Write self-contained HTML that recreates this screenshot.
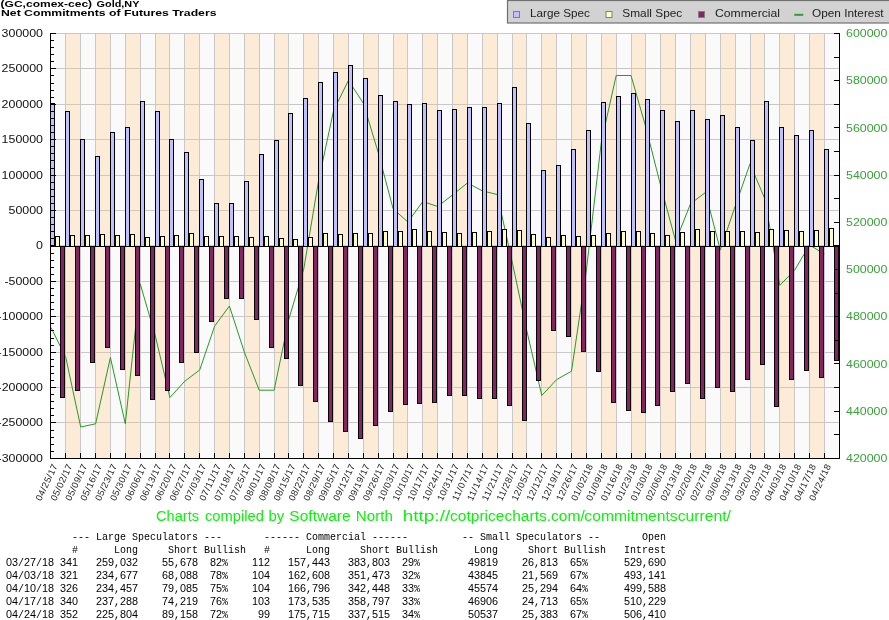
<!DOCTYPE html><html><head><meta charset="utf-8"><title>COT</title>
<style>html,body{margin:0;padding:0;background:#fff}svg{display:block;will-change:transform}text{font-family:"Liberation Sans",sans-serif}.d{font-size:10.8px;fill:#000}.m{font-family:"Liberation Mono",monospace;font-size:11.6px;fill:#000}</style></head><body>
<svg width="889" height="620" viewBox="0 0 889 620">
<rect width="889" height="620" fill="#fff"/>
<g shape-rendering="crispEdges">
<rect x="51" y="33" width="788" height="426" fill="#fafafa"/>
<rect x="51" y="33" width="788" height="1" fill="#c8c8c8"/>
<rect x="51" y="68" width="788" height="1" fill="#c8c8c8"/>
<rect x="51" y="104" width="788" height="1" fill="#c8c8c8"/>
<rect x="51" y="139" width="788" height="1" fill="#c8c8c8"/>
<rect x="51" y="175" width="788" height="1" fill="#c8c8c8"/>
<rect x="51" y="210" width="788" height="1" fill="#c8c8c8"/>
<rect x="51" y="245" width="788" height="1" fill="#c8c8c8"/>
<rect x="51" y="281" width="788" height="1" fill="#c8c8c8"/>
<rect x="51" y="316" width="788" height="1" fill="#c8c8c8"/>
<rect x="51" y="352" width="788" height="1" fill="#c8c8c8"/>
<rect x="51" y="387" width="788" height="1" fill="#c8c8c8"/>
<rect x="51" y="422" width="788" height="1" fill="#c8c8c8"/>
<rect x="51" y="458" width="788" height="1" fill="#c8c8c8"/>
<rect x="66" y="33" width="14" height="426" fill="#ffbe6e" fill-opacity="0.25"/>
<rect x="96" y="33" width="14" height="426" fill="#ffbe6e" fill-opacity="0.25"/>
<rect x="126" y="33" width="14" height="426" fill="#ffbe6e" fill-opacity="0.25"/>
<rect x="156" y="33" width="13" height="426" fill="#ffbe6e" fill-opacity="0.25"/>
<rect x="185" y="33" width="14" height="426" fill="#ffbe6e" fill-opacity="0.25"/>
<rect x="215" y="33" width="14" height="426" fill="#ffbe6e" fill-opacity="0.25"/>
<rect x="245" y="33" width="14" height="426" fill="#ffbe6e" fill-opacity="0.25"/>
<rect x="275" y="33" width="13" height="426" fill="#ffbe6e" fill-opacity="0.25"/>
<rect x="304" y="33" width="14" height="426" fill="#ffbe6e" fill-opacity="0.25"/>
<rect x="334" y="33" width="14" height="426" fill="#ffbe6e" fill-opacity="0.25"/>
<rect x="364" y="33" width="14" height="426" fill="#ffbe6e" fill-opacity="0.25"/>
<rect x="394" y="33" width="13" height="426" fill="#ffbe6e" fill-opacity="0.25"/>
<rect x="423" y="33" width="14" height="426" fill="#ffbe6e" fill-opacity="0.25"/>
<rect x="453" y="33" width="14" height="426" fill="#ffbe6e" fill-opacity="0.25"/>
<rect x="483" y="33" width="14" height="426" fill="#ffbe6e" fill-opacity="0.25"/>
<rect x="513" y="33" width="13" height="426" fill="#ffbe6e" fill-opacity="0.25"/>
<rect x="542" y="33" width="14" height="426" fill="#ffbe6e" fill-opacity="0.25"/>
<rect x="572" y="33" width="14" height="426" fill="#ffbe6e" fill-opacity="0.25"/>
<rect x="602" y="33" width="14" height="426" fill="#ffbe6e" fill-opacity="0.25"/>
<rect x="632" y="33" width="13" height="426" fill="#ffbe6e" fill-opacity="0.25"/>
<rect x="661" y="33" width="14" height="426" fill="#ffbe6e" fill-opacity="0.25"/>
<rect x="691" y="33" width="14" height="426" fill="#ffbe6e" fill-opacity="0.25"/>
<rect x="721" y="33" width="14" height="426" fill="#ffbe6e" fill-opacity="0.25"/>
<rect x="751" y="33" width="13" height="426" fill="#ffbe6e" fill-opacity="0.25"/>
<rect x="780" y="33" width="14" height="426" fill="#ffbe6e" fill-opacity="0.25"/>
<rect x="810" y="33" width="14" height="426" fill="#ffbe6e" fill-opacity="0.25"/>
<rect x="65" y="33" width="1" height="425" fill="#c8c8c8"/>
<rect x="80" y="33" width="1" height="425" fill="#c8c8c8"/>
<rect x="95" y="33" width="1" height="425" fill="#c8c8c8"/>
<rect x="110" y="33" width="1" height="425" fill="#c8c8c8"/>
<rect x="125" y="33" width="1" height="425" fill="#c8c8c8"/>
<rect x="140" y="33" width="1" height="425" fill="#c8c8c8"/>
<rect x="155" y="33" width="1" height="425" fill="#c8c8c8"/>
<rect x="169" y="33" width="1" height="425" fill="#c8c8c8"/>
<rect x="184" y="33" width="1" height="425" fill="#c8c8c8"/>
<rect x="199" y="33" width="1" height="425" fill="#c8c8c8"/>
<rect x="214" y="33" width="1" height="425" fill="#c8c8c8"/>
<rect x="229" y="33" width="1" height="425" fill="#c8c8c8"/>
<rect x="244" y="33" width="1" height="425" fill="#c8c8c8"/>
<rect x="259" y="33" width="1" height="425" fill="#c8c8c8"/>
<rect x="274" y="33" width="1" height="425" fill="#c8c8c8"/>
<rect x="288" y="33" width="1" height="425" fill="#c8c8c8"/>
<rect x="303" y="33" width="1" height="425" fill="#c8c8c8"/>
<rect x="318" y="33" width="1" height="425" fill="#c8c8c8"/>
<rect x="333" y="33" width="1" height="425" fill="#c8c8c8"/>
<rect x="348" y="33" width="1" height="425" fill="#c8c8c8"/>
<rect x="363" y="33" width="1" height="425" fill="#c8c8c8"/>
<rect x="378" y="33" width="1" height="425" fill="#c8c8c8"/>
<rect x="393" y="33" width="1" height="425" fill="#c8c8c8"/>
<rect x="407" y="33" width="1" height="425" fill="#c8c8c8"/>
<rect x="422" y="33" width="1" height="425" fill="#c8c8c8"/>
<rect x="437" y="33" width="1" height="425" fill="#c8c8c8"/>
<rect x="452" y="33" width="1" height="425" fill="#c8c8c8"/>
<rect x="467" y="33" width="1" height="425" fill="#c8c8c8"/>
<rect x="482" y="33" width="1" height="425" fill="#c8c8c8"/>
<rect x="497" y="33" width="1" height="425" fill="#c8c8c8"/>
<rect x="512" y="33" width="1" height="425" fill="#c8c8c8"/>
<rect x="526" y="33" width="1" height="425" fill="#c8c8c8"/>
<rect x="541" y="33" width="1" height="425" fill="#c8c8c8"/>
<rect x="556" y="33" width="1" height="425" fill="#c8c8c8"/>
<rect x="571" y="33" width="1" height="425" fill="#c8c8c8"/>
<rect x="586" y="33" width="1" height="425" fill="#c8c8c8"/>
<rect x="601" y="33" width="1" height="425" fill="#c8c8c8"/>
<rect x="616" y="33" width="1" height="425" fill="#c8c8c8"/>
<rect x="631" y="33" width="1" height="425" fill="#c8c8c8"/>
<rect x="645" y="33" width="1" height="425" fill="#c8c8c8"/>
<rect x="660" y="33" width="1" height="425" fill="#c8c8c8"/>
<rect x="675" y="33" width="1" height="425" fill="#c8c8c8"/>
<rect x="690" y="33" width="1" height="425" fill="#c8c8c8"/>
<rect x="705" y="33" width="1" height="425" fill="#c8c8c8"/>
<rect x="720" y="33" width="1" height="425" fill="#c8c8c8"/>
<rect x="735" y="33" width="1" height="425" fill="#c8c8c8"/>
<rect x="750" y="33" width="1" height="425" fill="#c8c8c8"/>
<rect x="764" y="33" width="1" height="425" fill="#c8c8c8"/>
<rect x="779" y="33" width="1" height="425" fill="#c8c8c8"/>
<rect x="794" y="33" width="1" height="425" fill="#c8c8c8"/>
<rect x="809" y="33" width="1" height="425" fill="#c8c8c8"/>
<rect x="824" y="33" width="1" height="425" fill="#c8c8c8"/>
</g>
<polyline points="51.0,327.5 65.8,357.5 80.7,427.0 95.6,423.8 110.4,357.5 125.3,423.8 140.2,283.8 155.1,335.0 169.9,397.5 184.8,381.2 199.7,370.0 214.6,326.2 229.4,306.0 244.3,352.0 259.2,390.2 274.1,390.2 288.9,319.0 303.8,268.8 318.7,180.0 333.6,110.5 348.4,80.5 363.3,103.0 378.2,152.5 393.1,208.8 407.9,222.0 422.8,201.5 437.7,206.5 452.5,195.0 467.4,183.0 482.3,190.8 497.2,194.5 512.0,261.0 526.9,331.2 541.8,395.5 556.7,379.5 571.5,371.2 586.4,270.0 601.3,142.2 616.2,75.5 631.0,75.5 645.9,127.5 660.8,186.2 675.7,241.2 690.5,203.8 705.4,192.5 720.3,250.0 735.2,206.2 750.0,163.8 764.9,199.0 779.8,285.3 794.7,270.1 809.5,245.0 824.4,254.0" fill="none" stroke="#279a27" stroke-width="1"/>
<g shape-rendering="crispEdges" stroke="#000" stroke-width="1">
<rect x="50.5" y="103.5" width="4" height="143" fill="#c0c0ff"/>
<rect x="55.5" y="236.5" width="4" height="10" fill="#ffffc0"/>
<rect x="60.5" y="246.5" width="4" height="151" fill="#882266"/>
<rect x="65.5" y="111.5" width="4" height="135" fill="#c0c0ff"/>
<rect x="70.5" y="235.5" width="4" height="11" fill="#ffffc0"/>
<rect x="75.5" y="246.5" width="4" height="144" fill="#882266"/>
<rect x="80.5" y="139.5" width="4" height="107" fill="#c0c0ff"/>
<rect x="85.5" y="235.5" width="4" height="11" fill="#ffffc0"/>
<rect x="90.5" y="246.5" width="4" height="116" fill="#882266"/>
<rect x="95.5" y="156.5" width="4" height="90" fill="#c0c0ff"/>
<rect x="100.5" y="234.5" width="4" height="12" fill="#ffffc0"/>
<rect x="105.5" y="246.5" width="4" height="101" fill="#882266"/>
<rect x="110.5" y="132.5" width="4" height="114" fill="#c0c0ff"/>
<rect x="115.5" y="235.5" width="4" height="11" fill="#ffffc0"/>
<rect x="120.5" y="246.5" width="4" height="123" fill="#882266"/>
<rect x="125.5" y="127.5" width="4" height="119" fill="#c0c0ff"/>
<rect x="130.5" y="234.5" width="4" height="12" fill="#ffffc0"/>
<rect x="135.5" y="246.5" width="4" height="129" fill="#882266"/>
<rect x="140.5" y="101.5" width="4" height="145" fill="#c0c0ff"/>
<rect x="145.5" y="237.5" width="4" height="9" fill="#ffffc0"/>
<rect x="150.5" y="246.5" width="4" height="153" fill="#882266"/>
<rect x="155.5" y="111.5" width="4" height="135" fill="#c0c0ff"/>
<rect x="160.5" y="236.5" width="4" height="10" fill="#ffffc0"/>
<rect x="165.5" y="246.5" width="4" height="144" fill="#882266"/>
<rect x="169.5" y="139.5" width="4" height="107" fill="#c0c0ff"/>
<rect x="174.5" y="235.5" width="4" height="11" fill="#ffffc0"/>
<rect x="179.5" y="246.5" width="4" height="116" fill="#882266"/>
<rect x="184.5" y="152.5" width="4" height="94" fill="#c0c0ff"/>
<rect x="189.5" y="233.5" width="4" height="13" fill="#ffffc0"/>
<rect x="194.5" y="246.5" width="4" height="106" fill="#882266"/>
<rect x="199.5" y="179.5" width="4" height="67" fill="#c0c0ff"/>
<rect x="204.5" y="236.5" width="4" height="10" fill="#ffffc0"/>
<rect x="209.5" y="246.5" width="4" height="75" fill="#882266"/>
<rect x="214.5" y="203.5" width="4" height="43" fill="#c0c0ff"/>
<rect x="219.5" y="236.5" width="4" height="10" fill="#ffffc0"/>
<rect x="224.5" y="246.5" width="4" height="52" fill="#882266"/>
<rect x="229.5" y="203.5" width="4" height="43" fill="#c0c0ff"/>
<rect x="234.5" y="236.5" width="4" height="10" fill="#ffffc0"/>
<rect x="239.5" y="246.5" width="4" height="52" fill="#882266"/>
<rect x="244.5" y="181.5" width="4" height="65" fill="#c0c0ff"/>
<rect x="249.5" y="237.5" width="4" height="9" fill="#ffffc0"/>
<rect x="254.5" y="246.5" width="4" height="73" fill="#882266"/>
<rect x="259.5" y="154.5" width="4" height="92" fill="#c0c0ff"/>
<rect x="264.5" y="236.5" width="4" height="10" fill="#ffffc0"/>
<rect x="269.5" y="246.5" width="4" height="101" fill="#882266"/>
<rect x="274.5" y="140.5" width="4" height="106" fill="#c0c0ff"/>
<rect x="279.5" y="238.5" width="4" height="8" fill="#ffffc0"/>
<rect x="284.5" y="246.5" width="4" height="112" fill="#882266"/>
<rect x="288.5" y="113.5" width="4" height="133" fill="#c0c0ff"/>
<rect x="293.5" y="239.5" width="4" height="7" fill="#ffffc0"/>
<rect x="298.5" y="246.5" width="4" height="139" fill="#882266"/>
<rect x="303.5" y="98.5" width="4" height="148" fill="#c0c0ff"/>
<rect x="308.5" y="237.5" width="4" height="9" fill="#ffffc0"/>
<rect x="313.5" y="246.5" width="4" height="155" fill="#882266"/>
<rect x="318.5" y="82.5" width="4" height="164" fill="#c0c0ff"/>
<rect x="323.5" y="233.5" width="4" height="13" fill="#ffffc0"/>
<rect x="328.5" y="246.5" width="4" height="175" fill="#882266"/>
<rect x="333.5" y="72.5" width="4" height="174" fill="#c0c0ff"/>
<rect x="338.5" y="234.5" width="4" height="12" fill="#ffffc0"/>
<rect x="343.5" y="246.5" width="4" height="185" fill="#882266"/>
<rect x="348.5" y="65.5" width="4" height="181" fill="#c0c0ff"/>
<rect x="353.5" y="233.5" width="4" height="13" fill="#ffffc0"/>
<rect x="358.5" y="246.5" width="4" height="192" fill="#882266"/>
<rect x="363.5" y="78.5" width="4" height="168" fill="#c0c0ff"/>
<rect x="368.5" y="233.5" width="4" height="13" fill="#ffffc0"/>
<rect x="373.5" y="246.5" width="4" height="179" fill="#882266"/>
<rect x="378.5" y="95.5" width="4" height="151" fill="#c0c0ff"/>
<rect x="383.5" y="231.5" width="4" height="15" fill="#ffffc0"/>
<rect x="388.5" y="246.5" width="4" height="165" fill="#882266"/>
<rect x="393.5" y="101.5" width="4" height="145" fill="#c0c0ff"/>
<rect x="398.5" y="231.5" width="4" height="15" fill="#ffffc0"/>
<rect x="403.5" y="246.5" width="4" height="158" fill="#882266"/>
<rect x="407.5" y="104.5" width="4" height="142" fill="#c0c0ff"/>
<rect x="412.5" y="229.5" width="4" height="17" fill="#ffffc0"/>
<rect x="417.5" y="246.5" width="4" height="157" fill="#882266"/>
<rect x="422.5" y="103.5" width="4" height="143" fill="#c0c0ff"/>
<rect x="427.5" y="231.5" width="4" height="15" fill="#ffffc0"/>
<rect x="432.5" y="246.5" width="4" height="156" fill="#882266"/>
<rect x="437.5" y="110.5" width="4" height="136" fill="#c0c0ff"/>
<rect x="442.5" y="232.5" width="4" height="14" fill="#ffffc0"/>
<rect x="447.5" y="246.5" width="4" height="149" fill="#882266"/>
<rect x="452.5" y="109.5" width="4" height="137" fill="#c0c0ff"/>
<rect x="457.5" y="233.5" width="4" height="13" fill="#ffffc0"/>
<rect x="462.5" y="246.5" width="4" height="149" fill="#882266"/>
<rect x="467.5" y="107.5" width="4" height="139" fill="#c0c0ff"/>
<rect x="472.5" y="232.5" width="4" height="14" fill="#ffffc0"/>
<rect x="477.5" y="246.5" width="4" height="152" fill="#882266"/>
<rect x="482.5" y="107.5" width="4" height="139" fill="#c0c0ff"/>
<rect x="487.5" y="231.5" width="4" height="15" fill="#ffffc0"/>
<rect x="492.5" y="246.5" width="4" height="152" fill="#882266"/>
<rect x="497.5" y="103.5" width="4" height="143" fill="#c0c0ff"/>
<rect x="502.5" y="229.5" width="4" height="17" fill="#ffffc0"/>
<rect x="507.5" y="246.5" width="4" height="159" fill="#882266"/>
<rect x="512.5" y="87.5" width="4" height="159" fill="#c0c0ff"/>
<rect x="517.5" y="230.5" width="4" height="16" fill="#ffffc0"/>
<rect x="522.5" y="246.5" width="4" height="174" fill="#882266"/>
<rect x="526.5" y="123.5" width="4" height="123" fill="#c0c0ff"/>
<rect x="531.5" y="234.5" width="4" height="12" fill="#ffffc0"/>
<rect x="536.5" y="246.5" width="4" height="134" fill="#882266"/>
<rect x="541.5" y="170.5" width="4" height="76" fill="#c0c0ff"/>
<rect x="546.5" y="237.5" width="4" height="9" fill="#ffffc0"/>
<rect x="551.5" y="246.5" width="4" height="84" fill="#882266"/>
<rect x="556.5" y="165.5" width="4" height="81" fill="#c0c0ff"/>
<rect x="561.5" y="235.5" width="4" height="11" fill="#ffffc0"/>
<rect x="566.5" y="246.5" width="4" height="90" fill="#882266"/>
<rect x="571.5" y="149.5" width="4" height="97" fill="#c0c0ff"/>
<rect x="576.5" y="236.5" width="4" height="10" fill="#ffffc0"/>
<rect x="581.5" y="246.5" width="4" height="105" fill="#882266"/>
<rect x="586.5" y="130.5" width="4" height="116" fill="#c0c0ff"/>
<rect x="591.5" y="235.5" width="4" height="11" fill="#ffffc0"/>
<rect x="596.5" y="246.5" width="4" height="125" fill="#882266"/>
<rect x="601.5" y="102.5" width="4" height="144" fill="#c0c0ff"/>
<rect x="606.5" y="233.5" width="4" height="13" fill="#ffffc0"/>
<rect x="611.5" y="246.5" width="4" height="156" fill="#882266"/>
<rect x="616.5" y="96.5" width="4" height="150" fill="#c0c0ff"/>
<rect x="621.5" y="231.5" width="4" height="15" fill="#ffffc0"/>
<rect x="626.5" y="246.5" width="4" height="164" fill="#882266"/>
<rect x="631.5" y="93.5" width="4" height="153" fill="#c0c0ff"/>
<rect x="636.5" y="231.5" width="4" height="15" fill="#ffffc0"/>
<rect x="641.5" y="246.5" width="4" height="166" fill="#882266"/>
<rect x="645.5" y="99.5" width="4" height="147" fill="#c0c0ff"/>
<rect x="650.5" y="233.5" width="4" height="13" fill="#ffffc0"/>
<rect x="655.5" y="246.5" width="4" height="159" fill="#882266"/>
<rect x="660.5" y="110.5" width="4" height="136" fill="#c0c0ff"/>
<rect x="665.5" y="235.5" width="4" height="11" fill="#ffffc0"/>
<rect x="670.5" y="246.5" width="4" height="145" fill="#882266"/>
<rect x="675.5" y="121.5" width="4" height="125" fill="#c0c0ff"/>
<rect x="680.5" y="232.5" width="4" height="14" fill="#ffffc0"/>
<rect x="685.5" y="246.5" width="4" height="137" fill="#882266"/>
<rect x="690.5" y="110.5" width="4" height="136" fill="#c0c0ff"/>
<rect x="695.5" y="229.5" width="4" height="17" fill="#ffffc0"/>
<rect x="700.5" y="246.5" width="4" height="152" fill="#882266"/>
<rect x="705.5" y="119.5" width="4" height="127" fill="#c0c0ff"/>
<rect x="710.5" y="231.5" width="4" height="15" fill="#ffffc0"/>
<rect x="715.5" y="246.5" width="4" height="141" fill="#882266"/>
<rect x="720.5" y="115.5" width="4" height="131" fill="#c0c0ff"/>
<rect x="725.5" y="231.5" width="4" height="15" fill="#ffffc0"/>
<rect x="730.5" y="246.5" width="4" height="145" fill="#882266"/>
<rect x="735.5" y="127.5" width="4" height="119" fill="#c0c0ff"/>
<rect x="740.5" y="231.5" width="4" height="15" fill="#ffffc0"/>
<rect x="745.5" y="246.5" width="4" height="133" fill="#882266"/>
<rect x="750.5" y="140.5" width="4" height="106" fill="#c0c0ff"/>
<rect x="755.5" y="232.5" width="4" height="14" fill="#ffffc0"/>
<rect x="760.5" y="246.5" width="4" height="118" fill="#882266"/>
<rect x="764.5" y="101.5" width="4" height="145" fill="#c0c0ff"/>
<rect x="769.5" y="229.5" width="4" height="17" fill="#ffffc0"/>
<rect x="774.5" y="246.5" width="4" height="160" fill="#882266"/>
<rect x="779.5" y="127.5" width="4" height="119" fill="#c0c0ff"/>
<rect x="784.5" y="230.5" width="4" height="16" fill="#ffffc0"/>
<rect x="789.5" y="246.5" width="4" height="133" fill="#882266"/>
<rect x="794.5" y="135.5" width="4" height="111" fill="#c0c0ff"/>
<rect x="799.5" y="231.5" width="4" height="15" fill="#ffffc0"/>
<rect x="804.5" y="246.5" width="4" height="124" fill="#882266"/>
<rect x="809.5" y="130.5" width="4" height="116" fill="#c0c0ff"/>
<rect x="814.5" y="230.5" width="4" height="16" fill="#ffffc0"/>
<rect x="819.5" y="246.5" width="4" height="131" fill="#882266"/>
<rect x="824.5" y="149.5" width="4" height="97" fill="#c0c0ff"/>
<rect x="829.5" y="228.5" width="4" height="18" fill="#ffffc0"/>
<rect x="834.5" y="246.5" width="4" height="114" fill="#882266"/>
</g>
<g shape-rendering="crispEdges" fill="#000">
<rect x="50" y="33" width="1.3" height="426"/>
<rect x="839" y="33" width="1.3" height="426"/>
<rect x="50" y="458" width="790" height="1.3"/>
<rect x="51" y="246" width="788" height="1"/>
<rect x="51" y="33" width="5" height="1"/>
<rect x="51" y="40" width="3" height="1"/>
<rect x="51" y="47" width="3" height="1"/>
<rect x="51" y="54" width="3" height="1"/>
<rect x="51" y="61" width="3" height="1"/>
<rect x="51" y="68" width="5" height="1"/>
<rect x="51" y="75" width="3" height="1"/>
<rect x="51" y="83" width="3" height="1"/>
<rect x="51" y="90" width="3" height="1"/>
<rect x="51" y="97" width="3" height="1"/>
<rect x="51" y="104" width="5" height="1"/>
<rect x="51" y="111" width="3" height="1"/>
<rect x="51" y="118" width="3" height="1"/>
<rect x="51" y="125" width="3" height="1"/>
<rect x="51" y="132" width="3" height="1"/>
<rect x="51" y="139" width="5" height="1"/>
<rect x="51" y="146" width="3" height="1"/>
<rect x="51" y="153" width="3" height="1"/>
<rect x="51" y="160" width="3" height="1"/>
<rect x="51" y="168" width="3" height="1"/>
<rect x="51" y="175" width="5" height="1"/>
<rect x="51" y="182" width="3" height="1"/>
<rect x="51" y="189" width="3" height="1"/>
<rect x="51" y="196" width="3" height="1"/>
<rect x="51" y="203" width="3" height="1"/>
<rect x="51" y="210" width="5" height="1"/>
<rect x="51" y="217" width="3" height="1"/>
<rect x="51" y="224" width="3" height="1"/>
<rect x="51" y="231" width="3" height="1"/>
<rect x="51" y="238" width="3" height="1"/>
<rect x="51" y="245" width="5" height="1"/>
<rect x="51" y="253" width="3" height="1"/>
<rect x="51" y="260" width="3" height="1"/>
<rect x="51" y="267" width="3" height="1"/>
<rect x="51" y="274" width="3" height="1"/>
<rect x="51" y="281" width="5" height="1"/>
<rect x="51" y="288" width="3" height="1"/>
<rect x="51" y="295" width="3" height="1"/>
<rect x="51" y="302" width="3" height="1"/>
<rect x="51" y="309" width="3" height="1"/>
<rect x="51" y="316" width="5" height="1"/>
<rect x="51" y="323" width="3" height="1"/>
<rect x="51" y="330" width="3" height="1"/>
<rect x="51" y="338" width="3" height="1"/>
<rect x="51" y="345" width="3" height="1"/>
<rect x="51" y="352" width="5" height="1"/>
<rect x="51" y="359" width="3" height="1"/>
<rect x="51" y="366" width="3" height="1"/>
<rect x="51" y="373" width="3" height="1"/>
<rect x="51" y="380" width="3" height="1"/>
<rect x="51" y="387" width="5" height="1"/>
<rect x="51" y="394" width="3" height="1"/>
<rect x="51" y="401" width="3" height="1"/>
<rect x="51" y="408" width="3" height="1"/>
<rect x="51" y="415" width="3" height="1"/>
<rect x="51" y="422" width="5" height="1"/>
<rect x="51" y="430" width="3" height="1"/>
<rect x="51" y="437" width="3" height="1"/>
<rect x="51" y="444" width="3" height="1"/>
<rect x="51" y="451" width="3" height="1"/>
<rect x="51" y="458" width="5" height="1"/>
<rect x="834" y="33" width="5" height="1"/>
<rect x="834" y="57" width="5" height="1"/>
<rect x="834" y="80" width="5" height="1"/>
<rect x="834" y="104" width="5" height="1"/>
<rect x="834" y="127" width="5" height="1"/>
<rect x="834" y="151" width="5" height="1"/>
<rect x="834" y="175" width="5" height="1"/>
<rect x="834" y="198" width="5" height="1"/>
<rect x="834" y="222" width="5" height="1"/>
<rect x="834" y="245" width="5" height="1"/>
<rect x="834" y="269" width="5" height="1"/>
<rect x="834" y="293" width="5" height="1"/>
<rect x="834" y="316" width="5" height="1"/>
<rect x="834" y="340" width="5" height="1"/>
<rect x="834" y="363" width="5" height="1"/>
<rect x="834" y="387" width="5" height="1"/>
<rect x="834" y="411" width="5" height="1"/>
<rect x="834" y="434" width="5" height="1"/>
<rect x="834" y="458" width="5" height="1"/>
<rect x="65" y="453" width="1" height="5"/>
<rect x="80" y="453" width="1" height="5"/>
<rect x="95" y="453" width="1" height="5"/>
<rect x="110" y="453" width="1" height="5"/>
<rect x="125" y="453" width="1" height="5"/>
<rect x="140" y="453" width="1" height="5"/>
<rect x="155" y="453" width="1" height="5"/>
<rect x="169" y="453" width="1" height="5"/>
<rect x="184" y="453" width="1" height="5"/>
<rect x="199" y="453" width="1" height="5"/>
<rect x="214" y="453" width="1" height="5"/>
<rect x="229" y="453" width="1" height="5"/>
<rect x="244" y="453" width="1" height="5"/>
<rect x="259" y="453" width="1" height="5"/>
<rect x="274" y="453" width="1" height="5"/>
<rect x="288" y="453" width="1" height="5"/>
<rect x="303" y="453" width="1" height="5"/>
<rect x="318" y="453" width="1" height="5"/>
<rect x="333" y="453" width="1" height="5"/>
<rect x="348" y="453" width="1" height="5"/>
<rect x="363" y="453" width="1" height="5"/>
<rect x="378" y="453" width="1" height="5"/>
<rect x="393" y="453" width="1" height="5"/>
<rect x="407" y="453" width="1" height="5"/>
<rect x="422" y="453" width="1" height="5"/>
<rect x="437" y="453" width="1" height="5"/>
<rect x="452" y="453" width="1" height="5"/>
<rect x="467" y="453" width="1" height="5"/>
<rect x="482" y="453" width="1" height="5"/>
<rect x="497" y="453" width="1" height="5"/>
<rect x="512" y="453" width="1" height="5"/>
<rect x="526" y="453" width="1" height="5"/>
<rect x="541" y="453" width="1" height="5"/>
<rect x="556" y="453" width="1" height="5"/>
<rect x="571" y="453" width="1" height="5"/>
<rect x="586" y="453" width="1" height="5"/>
<rect x="601" y="453" width="1" height="5"/>
<rect x="616" y="453" width="1" height="5"/>
<rect x="631" y="453" width="1" height="5"/>
<rect x="645" y="453" width="1" height="5"/>
<rect x="660" y="453" width="1" height="5"/>
<rect x="675" y="453" width="1" height="5"/>
<rect x="690" y="453" width="1" height="5"/>
<rect x="705" y="453" width="1" height="5"/>
<rect x="720" y="453" width="1" height="5"/>
<rect x="735" y="453" width="1" height="5"/>
<rect x="750" y="453" width="1" height="5"/>
<rect x="764" y="453" width="1" height="5"/>
<rect x="779" y="453" width="1" height="5"/>
<rect x="794" y="453" width="1" height="5"/>
<rect x="809" y="453" width="1" height="5"/>
<rect x="824" y="453" width="1" height="5"/>
</g>
<text x="43" y="36.9" font-size="10.7" text-anchor="end" textLength="41.4" lengthAdjust="spacingAndGlyphs" fill="#111">300000</text>
<text x="43" y="72.3" font-size="10.7" text-anchor="end" textLength="41.4" lengthAdjust="spacingAndGlyphs" fill="#111">250000</text>
<text x="43" y="107.7" font-size="10.7" text-anchor="end" textLength="41.4" lengthAdjust="spacingAndGlyphs" fill="#111">200000</text>
<text x="43" y="143.1" font-size="10.7" text-anchor="end" textLength="41.4" lengthAdjust="spacingAndGlyphs" fill="#111">150000</text>
<text x="43" y="178.5" font-size="10.7" text-anchor="end" textLength="41.4" lengthAdjust="spacingAndGlyphs" fill="#111">100000</text>
<text x="43" y="213.9" font-size="10.7" text-anchor="end" textLength="34.5" lengthAdjust="spacingAndGlyphs" fill="#111">50000</text>
<text x="43" y="249.3" font-size="10.7" text-anchor="end" textLength="6.9" lengthAdjust="spacingAndGlyphs" fill="#111">0</text>
<text x="43" y="284.8" font-size="10.7" text-anchor="end" textLength="38.5" lengthAdjust="spacingAndGlyphs" fill="#111">-50000</text>
<text x="43" y="320.2" font-size="10.7" text-anchor="end" textLength="45.4" lengthAdjust="spacingAndGlyphs" fill="#111">-100000</text>
<text x="43" y="355.6" font-size="10.7" text-anchor="end" textLength="45.4" lengthAdjust="spacingAndGlyphs" fill="#111">-150000</text>
<text x="43" y="391.0" font-size="10.7" text-anchor="end" textLength="45.4" lengthAdjust="spacingAndGlyphs" fill="#111">-200000</text>
<text x="43" y="426.4" font-size="10.7" text-anchor="end" textLength="45.4" lengthAdjust="spacingAndGlyphs" fill="#111">-250000</text>
<text x="43" y="461.8" font-size="10.7" text-anchor="end" textLength="45.4" lengthAdjust="spacingAndGlyphs" fill="#111">-300000</text>
<text x="846" y="37.1" font-size="10.7" textLength="41.3" lengthAdjust="spacingAndGlyphs" fill="#37a337">600000</text>
<text x="846" y="84.3" font-size="10.7" textLength="41.3" lengthAdjust="spacingAndGlyphs" fill="#37a337">580000</text>
<text x="846" y="131.5" font-size="10.7" textLength="41.3" lengthAdjust="spacingAndGlyphs" fill="#37a337">560000</text>
<text x="846" y="178.7" font-size="10.7" textLength="41.3" lengthAdjust="spacingAndGlyphs" fill="#37a337">540000</text>
<text x="846" y="225.9" font-size="10.7" textLength="41.3" lengthAdjust="spacingAndGlyphs" fill="#37a337">520000</text>
<text x="846" y="273.2" font-size="10.7" textLength="41.3" lengthAdjust="spacingAndGlyphs" fill="#37a337">500000</text>
<text x="846" y="320.4" font-size="10.7" textLength="41.3" lengthAdjust="spacingAndGlyphs" fill="#37a337">480000</text>
<text x="846" y="367.6" font-size="10.7" textLength="41.3" lengthAdjust="spacingAndGlyphs" fill="#37a337">460000</text>
<text x="846" y="414.8" font-size="10.7" textLength="41.3" lengthAdjust="spacingAndGlyphs" fill="#37a337">440000</text>
<text x="846" y="462.0" font-size="10.7" textLength="41.3" lengthAdjust="spacingAndGlyphs" fill="#37a337">420000</text>
<text transform="translate(57.7,466.0) rotate(-65)" font-size="9.3" text-anchor="end" textLength="39.3" lengthAdjust="spacing" fill="#222">04/25/17</text>
<text transform="translate(72.5,466.0) rotate(-65)" font-size="9.3" text-anchor="end" textLength="39.3" lengthAdjust="spacing" fill="#222">05/02/17</text>
<text transform="translate(87.4,466.0) rotate(-65)" font-size="9.3" text-anchor="end" textLength="39.3" lengthAdjust="spacing" fill="#222">05/09/17</text>
<text transform="translate(102.3,466.0) rotate(-65)" font-size="9.3" text-anchor="end" textLength="39.3" lengthAdjust="spacing" fill="#222">05/16/17</text>
<text transform="translate(117.1,466.0) rotate(-65)" font-size="9.3" text-anchor="end" textLength="39.3" lengthAdjust="spacing" fill="#222">05/23/17</text>
<text transform="translate(132.0,466.0) rotate(-65)" font-size="9.3" text-anchor="end" textLength="39.3" lengthAdjust="spacing" fill="#222">05/30/17</text>
<text transform="translate(146.9,466.0) rotate(-65)" font-size="9.3" text-anchor="end" textLength="39.3" lengthAdjust="spacing" fill="#222">06/06/17</text>
<text transform="translate(161.8,466.0) rotate(-65)" font-size="9.3" text-anchor="end" textLength="39.3" lengthAdjust="spacing" fill="#222">06/13/17</text>
<text transform="translate(176.6,466.0) rotate(-65)" font-size="9.3" text-anchor="end" textLength="39.3" lengthAdjust="spacing" fill="#222">06/20/17</text>
<text transform="translate(191.5,466.0) rotate(-65)" font-size="9.3" text-anchor="end" textLength="39.3" lengthAdjust="spacing" fill="#222">06/27/17</text>
<text transform="translate(206.4,466.0) rotate(-65)" font-size="9.3" text-anchor="end" textLength="39.3" lengthAdjust="spacing" fill="#222">07/03/17</text>
<text transform="translate(221.3,466.0) rotate(-65)" font-size="9.3" text-anchor="end" textLength="39.3" lengthAdjust="spacing" fill="#222">07/11/17</text>
<text transform="translate(236.1,466.0) rotate(-65)" font-size="9.3" text-anchor="end" textLength="39.3" lengthAdjust="spacing" fill="#222">07/18/17</text>
<text transform="translate(251.0,466.0) rotate(-65)" font-size="9.3" text-anchor="end" textLength="39.3" lengthAdjust="spacing" fill="#222">07/25/17</text>
<text transform="translate(265.9,466.0) rotate(-65)" font-size="9.3" text-anchor="end" textLength="39.3" lengthAdjust="spacing" fill="#222">08/01/17</text>
<text transform="translate(280.8,466.0) rotate(-65)" font-size="9.3" text-anchor="end" textLength="39.3" lengthAdjust="spacing" fill="#222">08/08/17</text>
<text transform="translate(295.6,466.0) rotate(-65)" font-size="9.3" text-anchor="end" textLength="39.3" lengthAdjust="spacing" fill="#222">08/15/17</text>
<text transform="translate(310.5,466.0) rotate(-65)" font-size="9.3" text-anchor="end" textLength="39.3" lengthAdjust="spacing" fill="#222">08/22/17</text>
<text transform="translate(325.4,466.0) rotate(-65)" font-size="9.3" text-anchor="end" textLength="39.3" lengthAdjust="spacing" fill="#222">08/29/17</text>
<text transform="translate(340.3,466.0) rotate(-65)" font-size="9.3" text-anchor="end" textLength="39.3" lengthAdjust="spacing" fill="#222">09/05/17</text>
<text transform="translate(355.1,466.0) rotate(-65)" font-size="9.3" text-anchor="end" textLength="39.3" lengthAdjust="spacing" fill="#222">09/12/17</text>
<text transform="translate(370.0,466.0) rotate(-65)" font-size="9.3" text-anchor="end" textLength="39.3" lengthAdjust="spacing" fill="#222">09/19/17</text>
<text transform="translate(384.9,466.0) rotate(-65)" font-size="9.3" text-anchor="end" textLength="39.3" lengthAdjust="spacing" fill="#222">09/26/17</text>
<text transform="translate(399.8,466.0) rotate(-65)" font-size="9.3" text-anchor="end" textLength="39.3" lengthAdjust="spacing" fill="#222">10/03/17</text>
<text transform="translate(414.6,466.0) rotate(-65)" font-size="9.3" text-anchor="end" textLength="39.3" lengthAdjust="spacing" fill="#222">10/10/17</text>
<text transform="translate(429.5,466.0) rotate(-65)" font-size="9.3" text-anchor="end" textLength="39.3" lengthAdjust="spacing" fill="#222">10/17/17</text>
<text transform="translate(444.4,466.0) rotate(-65)" font-size="9.3" text-anchor="end" textLength="39.3" lengthAdjust="spacing" fill="#222">10/24/17</text>
<text transform="translate(459.2,466.0) rotate(-65)" font-size="9.3" text-anchor="end" textLength="39.3" lengthAdjust="spacing" fill="#222">10/31/17</text>
<text transform="translate(474.1,466.0) rotate(-65)" font-size="9.3" text-anchor="end" textLength="39.3" lengthAdjust="spacing" fill="#222">11/07/17</text>
<text transform="translate(489.0,466.0) rotate(-65)" font-size="9.3" text-anchor="end" textLength="39.3" lengthAdjust="spacing" fill="#222">11/14/17</text>
<text transform="translate(503.9,466.0) rotate(-65)" font-size="9.3" text-anchor="end" textLength="39.3" lengthAdjust="spacing" fill="#222">11/21/17</text>
<text transform="translate(518.7,466.0) rotate(-65)" font-size="9.3" text-anchor="end" textLength="39.3" lengthAdjust="spacing" fill="#222">11/28/17</text>
<text transform="translate(533.6,466.0) rotate(-65)" font-size="9.3" text-anchor="end" textLength="39.3" lengthAdjust="spacing" fill="#222">12/05/17</text>
<text transform="translate(548.5,466.0) rotate(-65)" font-size="9.3" text-anchor="end" textLength="39.3" lengthAdjust="spacing" fill="#222">12/12/17</text>
<text transform="translate(563.4,466.0) rotate(-65)" font-size="9.3" text-anchor="end" textLength="39.3" lengthAdjust="spacing" fill="#222">12/19/17</text>
<text transform="translate(578.2,466.0) rotate(-65)" font-size="9.3" text-anchor="end" textLength="39.3" lengthAdjust="spacing" fill="#222">12/26/17</text>
<text transform="translate(593.1,466.0) rotate(-65)" font-size="9.3" text-anchor="end" textLength="39.3" lengthAdjust="spacing" fill="#222">01/02/18</text>
<text transform="translate(608.0,466.0) rotate(-65)" font-size="9.3" text-anchor="end" textLength="39.3" lengthAdjust="spacing" fill="#222">01/09/18</text>
<text transform="translate(622.9,466.0) rotate(-65)" font-size="9.3" text-anchor="end" textLength="39.3" lengthAdjust="spacing" fill="#222">01/16/18</text>
<text transform="translate(637.7,466.0) rotate(-65)" font-size="9.3" text-anchor="end" textLength="39.3" lengthAdjust="spacing" fill="#222">01/23/18</text>
<text transform="translate(652.6,466.0) rotate(-65)" font-size="9.3" text-anchor="end" textLength="39.3" lengthAdjust="spacing" fill="#222">01/30/18</text>
<text transform="translate(667.5,466.0) rotate(-65)" font-size="9.3" text-anchor="end" textLength="39.3" lengthAdjust="spacing" fill="#222">02/06/18</text>
<text transform="translate(682.4,466.0) rotate(-65)" font-size="9.3" text-anchor="end" textLength="39.3" lengthAdjust="spacing" fill="#222">02/13/18</text>
<text transform="translate(697.2,466.0) rotate(-65)" font-size="9.3" text-anchor="end" textLength="39.3" lengthAdjust="spacing" fill="#222">02/20/18</text>
<text transform="translate(712.1,466.0) rotate(-65)" font-size="9.3" text-anchor="end" textLength="39.3" lengthAdjust="spacing" fill="#222">02/27/18</text>
<text transform="translate(727.0,466.0) rotate(-65)" font-size="9.3" text-anchor="end" textLength="39.3" lengthAdjust="spacing" fill="#222">03/06/18</text>
<text transform="translate(741.9,466.0) rotate(-65)" font-size="9.3" text-anchor="end" textLength="39.3" lengthAdjust="spacing" fill="#222">03/13/18</text>
<text transform="translate(756.7,466.0) rotate(-65)" font-size="9.3" text-anchor="end" textLength="39.3" lengthAdjust="spacing" fill="#222">03/20/18</text>
<text transform="translate(771.6,466.0) rotate(-65)" font-size="9.3" text-anchor="end" textLength="39.3" lengthAdjust="spacing" fill="#222">03/27/18</text>
<text transform="translate(786.5,466.0) rotate(-65)" font-size="9.3" text-anchor="end" textLength="39.3" lengthAdjust="spacing" fill="#222">04/03/18</text>
<text transform="translate(801.4,466.0) rotate(-65)" font-size="9.3" text-anchor="end" textLength="39.3" lengthAdjust="spacing" fill="#222">04/10/18</text>
<text transform="translate(816.2,466.0) rotate(-65)" font-size="9.3" text-anchor="end" textLength="39.3" lengthAdjust="spacing" fill="#222">04/17/18</text>
<text transform="translate(831.1,466.0) rotate(-65)" font-size="9.3" text-anchor="end" textLength="39.3" lengthAdjust="spacing" fill="#222">04/24/18</text>
<text x="0.6" y="7.4" font-size="9.2" font-weight="bold" textLength="91.5" lengthAdjust="spacingAndGlyphs" fill="#000">(GC,comex-cec)</text>
<text x="96.6" y="7.4" font-size="9.2" font-weight="bold" textLength="42.8" lengthAdjust="spacingAndGlyphs" fill="#000">Gold,NY</text>
<text x="1" y="15.7" font-size="9.2" font-weight="bold" textLength="215.5" lengthAdjust="spacingAndGlyphs" fill="#000">Net Commitments of Futures Traders</text>
<rect x="507.5" y="0.5" width="390" height="22.5" fill="#d2d2d2" stroke="#707070" stroke-width="1.2"/>
<rect x="513.5" y="11.5" width="6" height="6" fill="#c0c0ff" stroke="#808080" stroke-width="1"/>
<rect x="606" y="11.5" width="6" height="6" fill="#ffffc0" stroke="#808080" stroke-width="1"/>
<rect x="698.5" y="11.5" width="6" height="6" fill="#882266" stroke="#808080" stroke-width="1"/>
<rect x="794.3" y="13.8" width="9" height="2" fill="#2f9e2f"/>
<text x="530" y="17" font-size="11.2" textLength="60" lengthAdjust="spacingAndGlyphs" fill="#222">Large Spec</text>
<text x="622.3" y="17" font-size="11.2" textLength="60" lengthAdjust="spacingAndGlyphs" fill="#222">Small Spec</text>
<text x="715" y="17" font-size="11.2" textLength="65" lengthAdjust="spacingAndGlyphs" fill="#222">Commercial</text>
<text x="812" y="17" font-size="11.2" textLength="71.6" lengthAdjust="spacingAndGlyphs" fill="#222">Open Interest</text>
<text x="156.0" y="521.3" font-size="15.4" textLength="43.1" lengthAdjust="spacingAndGlyphs" fill="#0cf20c">Charts</text>
<text x="204.9" y="521.3" font-size="15.4" textLength="59.0" lengthAdjust="spacingAndGlyphs" fill="#0cf20c">compiled</text>
<text x="268.4" y="521.3" font-size="15.4" textLength="15.8" lengthAdjust="spacingAndGlyphs" fill="#0cf20c">by</text>
<text x="289.3" y="521.3" font-size="15.4" textLength="61.4" lengthAdjust="spacingAndGlyphs" fill="#0cf20c">Software</text>
<text x="355.8" y="521.3" font-size="15.4" textLength="37.0" lengthAdjust="spacingAndGlyphs" fill="#0cf20c">North</text>
<text x="402.7" y="521.3" font-size="15.4" textLength="47.5" lengthAdjust="spacingAndGlyphs" fill="#0cf20c">http://</text>
<text x="450.0" y="521.3" font-size="15.4" textLength="134.8" lengthAdjust="spacingAndGlyphs" fill="#0cf20c">cotpricecharts.com/</text>
<text x="584.3" y="521.3" font-size="15.4" textLength="146.7" lengthAdjust="spacingAndGlyphs" fill="#0cf20c">commitmentscurrent/</text>
<text class="m" x="72" y="540" textLength="150" lengthAdjust="spacingAndGlyphs" xml:space="preserve">--- Large Speculators ---</text>
<text class="m" x="264" y="540" textLength="144" lengthAdjust="spacingAndGlyphs" xml:space="preserve">------ Commercial ------</text>
<text class="m" x="462" y="540" textLength="138" lengthAdjust="spacingAndGlyphs" xml:space="preserve">-- Small Speculators --</text>
<text class="m" x="642" y="540" textLength="24" lengthAdjust="spacingAndGlyphs" xml:space="preserve">Open</text>
<text class="m" x="72" y="553" textLength="6" lengthAdjust="spacingAndGlyphs" xml:space="preserve">#</text>
<text class="m" x="114" y="553" textLength="24" lengthAdjust="spacingAndGlyphs" xml:space="preserve">Long</text>
<text class="m" x="168" y="553" textLength="30" lengthAdjust="spacingAndGlyphs" xml:space="preserve">Short</text>
<text class="m" x="204" y="553" textLength="42" lengthAdjust="spacingAndGlyphs" xml:space="preserve">Bullish</text>
<text class="m" x="264" y="553" textLength="6" lengthAdjust="spacingAndGlyphs" xml:space="preserve">#</text>
<text class="m" x="306" y="553" textLength="24" lengthAdjust="spacingAndGlyphs" xml:space="preserve">Long</text>
<text class="m" x="360" y="553" textLength="30" lengthAdjust="spacingAndGlyphs" xml:space="preserve">Short</text>
<text class="m" x="396" y="553" textLength="42" lengthAdjust="spacingAndGlyphs" xml:space="preserve">Bullish</text>
<text class="m" x="474" y="553" textLength="24" lengthAdjust="spacingAndGlyphs" xml:space="preserve">Long</text>
<text class="m" x="528" y="553" textLength="30" lengthAdjust="spacingAndGlyphs" xml:space="preserve">Short</text>
<text class="m" x="564" y="553" textLength="42" lengthAdjust="spacingAndGlyphs" xml:space="preserve">Bullish</text>
<text class="m" x="624" y="553" textLength="42" lengthAdjust="spacingAndGlyphs" xml:space="preserve">Intrest</text>
<text class="m" x="6" y="566" textLength="48" lengthAdjust="spacingAndGlyphs" xml:space="preserve">  /  /  </text>
<text class="d" x="6.05 12.05 24.05 30.05 42.05 48.05" y="566">032718</text>
<text class="d" x="60.05 66.05 72.05" y="566">341</text>
<text class="m" x="96" y="566" textLength="42" lengthAdjust="spacingAndGlyphs" xml:space="preserve">   ,   </text>
<text class="d" x="96.05 102.05 108.05 120.05 126.05 132.05" y="566">259032</text>
<text class="m" x="162" y="566" textLength="36" lengthAdjust="spacingAndGlyphs" xml:space="preserve">  ,   </text>
<text class="d" x="162.05 168.05 180.05 186.05 192.05" y="566">55678</text>
<text class="m" x="210" y="566" textLength="18" lengthAdjust="spacingAndGlyphs" xml:space="preserve">  %</text>
<text class="d" x="210.05 216.05" y="566">82</text>
<text class="d" x="252.05 258.05 264.05" y="566">112</text>
<text class="m" x="288" y="566" textLength="42" lengthAdjust="spacingAndGlyphs" xml:space="preserve">   ,   </text>
<text class="d" x="288.05 294.05 300.05 312.05 318.05 324.05" y="566">157443</text>
<text class="m" x="348" y="566" textLength="42" lengthAdjust="spacingAndGlyphs" xml:space="preserve">   ,   </text>
<text class="d" x="348.05 354.05 360.05 372.05 378.05 384.05" y="566">383803</text>
<text class="m" x="402" y="566" textLength="18" lengthAdjust="spacingAndGlyphs" xml:space="preserve">  %</text>
<text class="d" x="402.05 408.05" y="566">29</text>
<text class="d" x="468.05 474.05 480.05 486.05 492.05" y="566">49819</text>
<text class="m" x="522" y="566" textLength="36" lengthAdjust="spacingAndGlyphs" xml:space="preserve">  ,   </text>
<text class="d" x="522.05 528.05 540.05 546.05 552.05" y="566">26813</text>
<text class="m" x="570" y="566" textLength="18" lengthAdjust="spacingAndGlyphs" xml:space="preserve">  %</text>
<text class="d" x="570.05 576.05" y="566">65</text>
<text class="m" x="624" y="566" textLength="42" lengthAdjust="spacingAndGlyphs" xml:space="preserve">   ,   </text>
<text class="d" x="624.05 630.05 636.05 648.05 654.05 660.05" y="566">529690</text>
<text class="m" x="6" y="579" textLength="48" lengthAdjust="spacingAndGlyphs" xml:space="preserve">  /  /  </text>
<text class="d" x="6.05 12.05 24.05 30.05 42.05 48.05" y="579">040318</text>
<text class="d" x="60.05 66.05 72.05" y="579">321</text>
<text class="m" x="96" y="579" textLength="42" lengthAdjust="spacingAndGlyphs" xml:space="preserve">   ,   </text>
<text class="d" x="96.05 102.05 108.05 120.05 126.05 132.05" y="579">234677</text>
<text class="m" x="162" y="579" textLength="36" lengthAdjust="spacingAndGlyphs" xml:space="preserve">  ,   </text>
<text class="d" x="162.05 168.05 180.05 186.05 192.05" y="579">68088</text>
<text class="m" x="210" y="579" textLength="18" lengthAdjust="spacingAndGlyphs" xml:space="preserve">  %</text>
<text class="d" x="210.05 216.05" y="579">78</text>
<text class="d" x="252.05 258.05 264.05" y="579">104</text>
<text class="m" x="288" y="579" textLength="42" lengthAdjust="spacingAndGlyphs" xml:space="preserve">   ,   </text>
<text class="d" x="288.05 294.05 300.05 312.05 318.05 324.05" y="579">162608</text>
<text class="m" x="348" y="579" textLength="42" lengthAdjust="spacingAndGlyphs" xml:space="preserve">   ,   </text>
<text class="d" x="348.05 354.05 360.05 372.05 378.05 384.05" y="579">351473</text>
<text class="m" x="402" y="579" textLength="18" lengthAdjust="spacingAndGlyphs" xml:space="preserve">  %</text>
<text class="d" x="402.05 408.05" y="579">32</text>
<text class="d" x="468.05 474.05 480.05 486.05 492.05" y="579">43845</text>
<text class="m" x="522" y="579" textLength="36" lengthAdjust="spacingAndGlyphs" xml:space="preserve">  ,   </text>
<text class="d" x="522.05 528.05 540.05 546.05 552.05" y="579">21569</text>
<text class="m" x="570" y="579" textLength="18" lengthAdjust="spacingAndGlyphs" xml:space="preserve">  %</text>
<text class="d" x="570.05 576.05" y="579">67</text>
<text class="m" x="624" y="579" textLength="42" lengthAdjust="spacingAndGlyphs" xml:space="preserve">   ,   </text>
<text class="d" x="624.05 630.05 636.05 648.05 654.05 660.05" y="579">493141</text>
<text class="m" x="6" y="592" textLength="48" lengthAdjust="spacingAndGlyphs" xml:space="preserve">  /  /  </text>
<text class="d" x="6.05 12.05 24.05 30.05 42.05 48.05" y="592">041018</text>
<text class="d" x="60.05 66.05 72.05" y="592">326</text>
<text class="m" x="96" y="592" textLength="42" lengthAdjust="spacingAndGlyphs" xml:space="preserve">   ,   </text>
<text class="d" x="96.05 102.05 108.05 120.05 126.05 132.05" y="592">234457</text>
<text class="m" x="162" y="592" textLength="36" lengthAdjust="spacingAndGlyphs" xml:space="preserve">  ,   </text>
<text class="d" x="162.05 168.05 180.05 186.05 192.05" y="592">79085</text>
<text class="m" x="210" y="592" textLength="18" lengthAdjust="spacingAndGlyphs" xml:space="preserve">  %</text>
<text class="d" x="210.05 216.05" y="592">75</text>
<text class="d" x="252.05 258.05 264.05" y="592">104</text>
<text class="m" x="288" y="592" textLength="42" lengthAdjust="spacingAndGlyphs" xml:space="preserve">   ,   </text>
<text class="d" x="288.05 294.05 300.05 312.05 318.05 324.05" y="592">166796</text>
<text class="m" x="348" y="592" textLength="42" lengthAdjust="spacingAndGlyphs" xml:space="preserve">   ,   </text>
<text class="d" x="348.05 354.05 360.05 372.05 378.05 384.05" y="592">342448</text>
<text class="m" x="402" y="592" textLength="18" lengthAdjust="spacingAndGlyphs" xml:space="preserve">  %</text>
<text class="d" x="402.05 408.05" y="592">33</text>
<text class="d" x="468.05 474.05 480.05 486.05 492.05" y="592">45574</text>
<text class="m" x="522" y="592" textLength="36" lengthAdjust="spacingAndGlyphs" xml:space="preserve">  ,   </text>
<text class="d" x="522.05 528.05 540.05 546.05 552.05" y="592">25294</text>
<text class="m" x="570" y="592" textLength="18" lengthAdjust="spacingAndGlyphs" xml:space="preserve">  %</text>
<text class="d" x="570.05 576.05" y="592">64</text>
<text class="m" x="624" y="592" textLength="42" lengthAdjust="spacingAndGlyphs" xml:space="preserve">   ,   </text>
<text class="d" x="624.05 630.05 636.05 648.05 654.05 660.05" y="592">499588</text>
<text class="m" x="6" y="605" textLength="48" lengthAdjust="spacingAndGlyphs" xml:space="preserve">  /  /  </text>
<text class="d" x="6.05 12.05 24.05 30.05 42.05 48.05" y="605">041718</text>
<text class="d" x="60.05 66.05 72.05" y="605">340</text>
<text class="m" x="96" y="605" textLength="42" lengthAdjust="spacingAndGlyphs" xml:space="preserve">   ,   </text>
<text class="d" x="96.05 102.05 108.05 120.05 126.05 132.05" y="605">237288</text>
<text class="m" x="162" y="605" textLength="36" lengthAdjust="spacingAndGlyphs" xml:space="preserve">  ,   </text>
<text class="d" x="162.05 168.05 180.05 186.05 192.05" y="605">74219</text>
<text class="m" x="210" y="605" textLength="18" lengthAdjust="spacingAndGlyphs" xml:space="preserve">  %</text>
<text class="d" x="210.05 216.05" y="605">76</text>
<text class="d" x="252.05 258.05 264.05" y="605">103</text>
<text class="m" x="288" y="605" textLength="42" lengthAdjust="spacingAndGlyphs" xml:space="preserve">   ,   </text>
<text class="d" x="288.05 294.05 300.05 312.05 318.05 324.05" y="605">173535</text>
<text class="m" x="348" y="605" textLength="42" lengthAdjust="spacingAndGlyphs" xml:space="preserve">   ,   </text>
<text class="d" x="348.05 354.05 360.05 372.05 378.05 384.05" y="605">358797</text>
<text class="m" x="402" y="605" textLength="18" lengthAdjust="spacingAndGlyphs" xml:space="preserve">  %</text>
<text class="d" x="402.05 408.05" y="605">33</text>
<text class="d" x="468.05 474.05 480.05 486.05 492.05" y="605">46906</text>
<text class="m" x="522" y="605" textLength="36" lengthAdjust="spacingAndGlyphs" xml:space="preserve">  ,   </text>
<text class="d" x="522.05 528.05 540.05 546.05 552.05" y="605">24713</text>
<text class="m" x="570" y="605" textLength="18" lengthAdjust="spacingAndGlyphs" xml:space="preserve">  %</text>
<text class="d" x="570.05 576.05" y="605">65</text>
<text class="m" x="624" y="605" textLength="42" lengthAdjust="spacingAndGlyphs" xml:space="preserve">   ,   </text>
<text class="d" x="624.05 630.05 636.05 648.05 654.05 660.05" y="605">510229</text>
<text class="m" x="6" y="618" textLength="48" lengthAdjust="spacingAndGlyphs" xml:space="preserve">  /  /  </text>
<text class="d" x="6.05 12.05 24.05 30.05 42.05 48.05" y="618">042418</text>
<text class="d" x="60.05 66.05 72.05" y="618">352</text>
<text class="m" x="96" y="618" textLength="42" lengthAdjust="spacingAndGlyphs" xml:space="preserve">   ,   </text>
<text class="d" x="96.05 102.05 108.05 120.05 126.05 132.05" y="618">225804</text>
<text class="m" x="162" y="618" textLength="36" lengthAdjust="spacingAndGlyphs" xml:space="preserve">  ,   </text>
<text class="d" x="162.05 168.05 180.05 186.05 192.05" y="618">89158</text>
<text class="m" x="210" y="618" textLength="18" lengthAdjust="spacingAndGlyphs" xml:space="preserve">  %</text>
<text class="d" x="210.05 216.05" y="618">72</text>
<text class="d" x="258.05 264.05" y="618">99</text>
<text class="m" x="288" y="618" textLength="42" lengthAdjust="spacingAndGlyphs" xml:space="preserve">   ,   </text>
<text class="d" x="288.05 294.05 300.05 312.05 318.05 324.05" y="618">175715</text>
<text class="m" x="348" y="618" textLength="42" lengthAdjust="spacingAndGlyphs" xml:space="preserve">   ,   </text>
<text class="d" x="348.05 354.05 360.05 372.05 378.05 384.05" y="618">337515</text>
<text class="m" x="402" y="618" textLength="18" lengthAdjust="spacingAndGlyphs" xml:space="preserve">  %</text>
<text class="d" x="402.05 408.05" y="618">34</text>
<text class="d" x="468.05 474.05 480.05 486.05 492.05" y="618">50537</text>
<text class="m" x="522" y="618" textLength="36" lengthAdjust="spacingAndGlyphs" xml:space="preserve">  ,   </text>
<text class="d" x="522.05 528.05 540.05 546.05 552.05" y="618">25383</text>
<text class="m" x="570" y="618" textLength="18" lengthAdjust="spacingAndGlyphs" xml:space="preserve">  %</text>
<text class="d" x="570.05 576.05" y="618">67</text>
<text class="m" x="624" y="618" textLength="42" lengthAdjust="spacingAndGlyphs" xml:space="preserve">   ,   </text>
<text class="d" x="624.05 630.05 636.05 648.05 654.05 660.05" y="618">506410</text>
</svg></body></html>
